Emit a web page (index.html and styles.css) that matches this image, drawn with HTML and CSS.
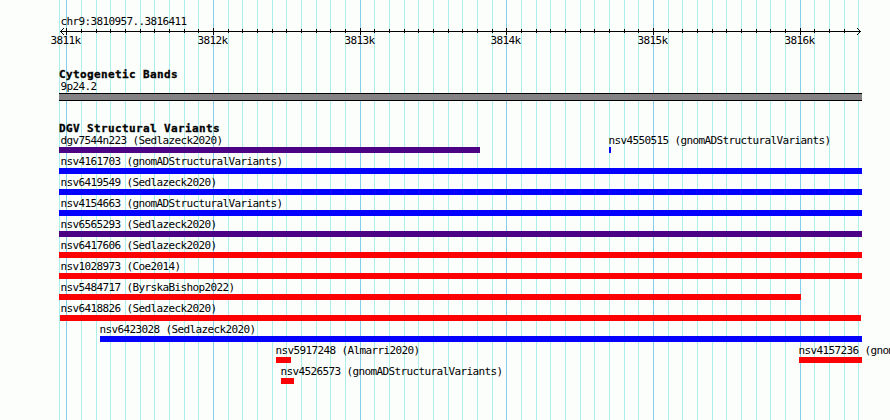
FILE: index.html
```html
<!DOCTYPE html>
<html lang="en">
<head>
<meta charset="utf-8">
<title>chr9:3810957..3816411</title>
<link rel="stylesheet" href="styles.css">
</head>
<body>
<main class="browser">
  <svg class="gridlines" width="890" height="420" shape-rendering="crispEdges" aria-hidden="true">
    <path class="minor" id="minor-lines"/>
    <path class="major" id="major-lines"/>
  </svg>
  <section class="overview">
    <div class="label">chr9:3810957..3816411</div>
    <svg class="ruler" width="890" height="8" shape-rendering="crispEdges" aria-hidden="true">
      <path d="M60 4.5H861"/>
      <path id="ticks"/>
      <path d="M61 3.5h1M62 2.5h1M63 1.5h1M61 5.5h1M62 6.5h1M63 7.5h1M859 3.5h1M858 2.5h1M857 1.5h1M859 5.5h1M858 6.5h1M857 7.5h1"/>
    </svg>
    <div class="scale"><span>3811k</span><span>3812k</span><span>3813k</span><span>3814k</span><span>3815k</span><span>3816k</span></div>
  </section>
  <section class="bands">
    <h2>Cytogenetic Bands</h2>
    <div class="label">9p24.2</div>
    <div class="band"></div>
  </section>
  <section class="variants">
    <h2>DGV Structural Variants</h2>
    <div id="rows"></div>
  </section>
</main>
<script src="main.js"></script>
</body>
</html>
```
FILE: styles.css
```css
body {
  margin: 0;
  background: #fcfefc;
  color: #000;
  font: 11px/14px "DejaVu Sans Mono", monospace;
  letter-spacing: -0.622px;
}

.browser {
  position: relative;
  width: 890px;
  height: 420px;
  overflow: hidden;
}

.gridlines {
  position: absolute;
  inset: 0;
  z-index: -1;
}

.gridlines path,
.ruler path {
  fill: none;
  stroke-width: 1;
}

.gridlines .minor { stroke: #aceeec; }
.gridlines .major { stroke: #84ceec; }

.overview { padding-top: 15px; }

.label {
  height: 12px;
  padding-left: 60.5px;
  white-space: nowrap;
}

.ruler {
  display: block;
  margin-bottom: -1px;
}

.ruler path { stroke: #000; }

.scale {
  display: grid;
  grid-template-columns: 147px 147px 146px 147px 147px 30px;
  height: 12px;
  margin-left: 50.5px;
}

h2 {
  height: 12px;
  margin: 0 0 0 59px;
  font-size: 11px;
  line-height: 14px;
  font-weight: bold;
  letter-spacing: 0.378px;
  -webkit-text-stroke: 0.3px #000;
}

.bands { margin-top: 22px; }

.band {
  box-sizing: border-box;
  width: 803px;
  height: 8px;
  margin: 1px 0 0 59px;
  border: solid #000;
  border-width: 1px 0;
  background: #848284;
}

.variants { margin-top: 21px; }

.row {
  display: flex;
  height: 21px;
}

.feature { flex: none; }

.name {
  height: 13px;
  white-space: nowrap;
}

.name.inset { padding-left: 1.5px; }

.bar { height: 6px; }
.gain { background: #0402fc; }
.loss { background: #fc0204; }
.complex { background: #4c0284; }
```
FILE: main.js
```js
// Vertical gridlines fall every 100 bp, with a major line every 1 kb.
let minor = "M59.5 0V420", major = "", ticks = "";
for (let k = 0; k <= 54; k++) {
  const x = Math.floor(66.9 + k * 14.668) + 0.5;
  if (k % 10 === 0) {
    major += `M${x} 0V420`;
    ticks += `M${x} 1V8`;
  } else {
    minor += `M${x} 0V420`;
    if (k < 54) ticks += `M${x} 2V6`;
  }
}
document.getElementById("minor-lines").setAttribute("d", minor);
document.getElementById("major-lines").setAttribute("d", major);
document.getElementById("ticks").setAttribute("d", ticks);

// Each row lists features as [name, start, end, type].
const rows = [
  [["dgv7544n223 (Sedlazeck2020)", 59, 480, "complex"], ["nsv4550515 (gnomADStructuralVariants)", 609, 611, "gain"]],
  [["nsv4161703 (gnomADStructuralVariants)", 59, 862, "gain"]],
  [["nsv6419549 (Sedlazeck2020)", 59, 862, "gain"]],
  [["nsv4154663 (gnomADStructuralVariants)", 59, 862, "gain"]],
  [["nsv6565293 (Sedlazeck2020)", 59, 862, "complex"]],
  [["nsv6417606 (Sedlazeck2020)", 59, 862, "loss"]],
  [["nsv1028973 (Coe2014)", 59, 862, "loss"]],
  [["nsv5484717 (ByrskaBishop2022)", 59, 801, "loss"]],
  [["nsv6418826 (Sedlazeck2020)", 60, 861, "loss"]],
  [["nsv6423028 (Sedlazeck2020)", 100, 862, "gain"]],
  [["nsv5917248 (Almarri2020)", 276, 291, "loss"], ["nsv4157236 (gnomADStructuralVariants)", 799, 862, "loss"]],
  [["nsv4526573 (gnomADStructuralVariants)", 281, 294, "loss"]]
];
const container = document.getElementById("rows");
for (const features of rows) {
  const row = document.createElement("div");
  row.className = "row";
  let cursor = 0;
  for (const [text, start, end, type] of features) {
    const feature = document.createElement("div");
    feature.className = "feature";
    feature.style.marginLeft = `${start - cursor}px`;
    feature.style.width = `${end - start}px`;
    const name = document.createElement("div");
    name.className = start === 59 ? "name inset" : "name";
    name.textContent = text;
    if (start > 60) name.style.marginLeft = "-0.5px";
    if (start === 60) name.style.marginLeft = "0.5px";
    const bar = document.createElement("div");
    bar.className = `bar ${type}`;
    feature.append(name, bar);
    row.append(feature);
    cursor = end;
  }
  container.append(row);
}
```
